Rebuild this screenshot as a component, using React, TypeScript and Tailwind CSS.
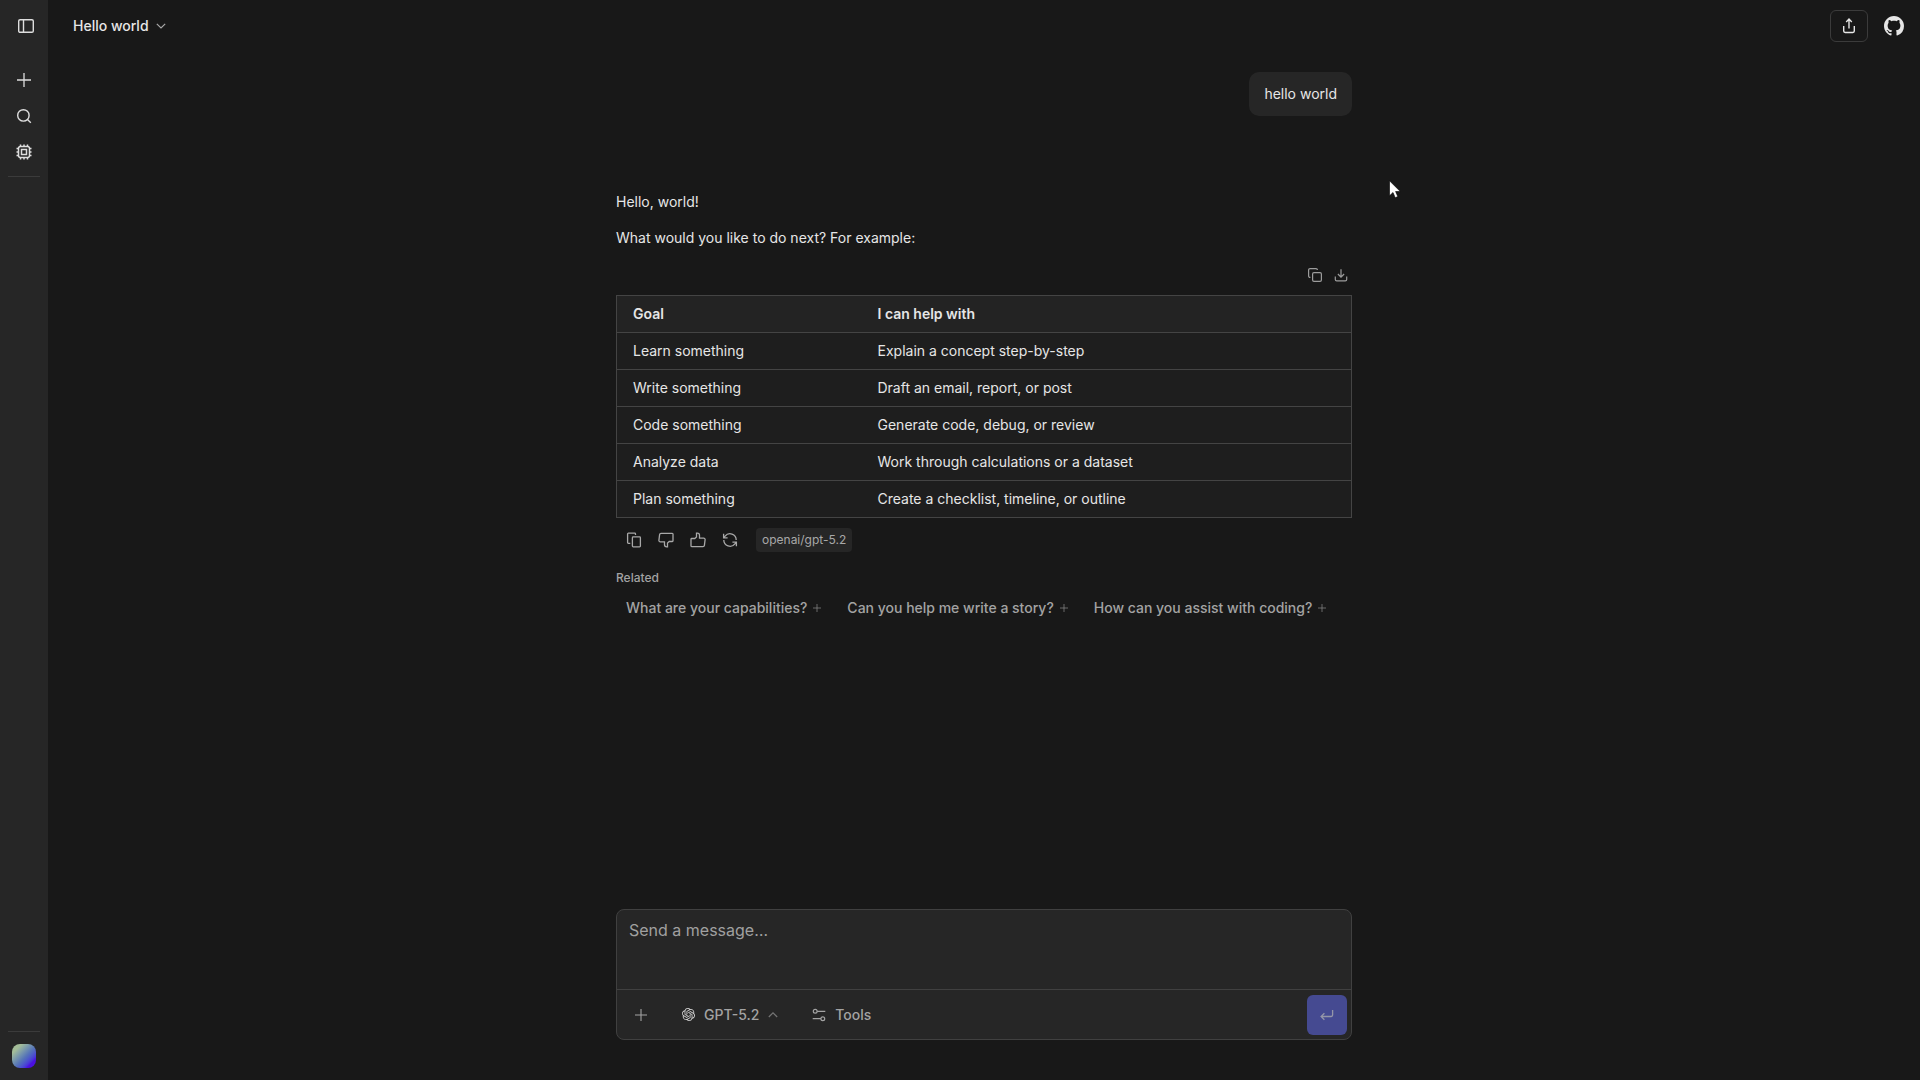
import type { ReactNode } from "react";

interface IconProps {
  size?: number;
  className?: string;
  viewBox?: string;
  strokeWidth?: number;
  children: ReactNode;
}

function Icon({ size = 16, className = "", viewBox = "0 0 16 16", strokeWidth = 1.2, children }: IconProps) {
  return (
    <svg
      width={size}
      height={size}
      viewBox={viewBox}
      fill="none"
      stroke="currentColor"
      strokeWidth={strokeWidth}
      className={`shrink-0 ${className}`}
      aria-hidden="true"
    >
      {children}
    </svg>
  );
}

function PanelIcon() {
  return (
    <Icon strokeWidth={1.4}>
      <rect x="0.7" y="1.7" width="14.6" height="12.6" rx="1.4" />
      <path d="M5.5 1.7v12.6" />
    </Icon>
  );
}

function PlusIcon({ size = 14, className = "" }: { size?: number; className?: string }) {
  return (
    <Icon size={size} viewBox="0 0 14 14" strokeWidth={1.3} className={className}>
      <path d="M7 0v14M0 7h14" />
    </Icon>
  );
}

function SearchIcon() {
  return (
    <Icon strokeWidth={1.4}>
      <circle cx="7.4" cy="7.4" r="5.7" />
      <path d="m11.5 11.5 3.3 3.3" />
    </Icon>
  );
}

function ChipIcon() {
  return (
    <Icon strokeWidth={1.5}>
      <rect x="2.5" y="2.5" width="11" height="11" rx="2" />
      <rect x="5.5" y="5.5" width="5" height="5" />
      <path d="M4.5.5v2M8 .5v2M11.5.5v2M4.5 13.5v2M8 13.5v2M11.5 13.5v2M.5 4.5h2M.5 8h2M.5 11.5h2M13.5 4.5h2M13.5 8h2M13.5 11.5h2" />
    </Icon>
  );
}

function ShareIcon() {
  return (
    <Icon strokeWidth={1.4}>
      <path d="M2.7 8v5.1c0 .8.6 1.4 1.4 1.4h7.8c.8 0 1.4-.6 1.4-1.4V8M8 10.5V1.2M5.2 3.9 8 1.1l2.8 2.8" />
    </Icon>
  );
}

function GithubIcon() {
  return (
    <svg width="20" height="20" viewBox="0 0 16 16" fill="currentColor" aria-hidden="true">
      <path d="M8 0C3.58 0 0 3.58 0 8c0 3.54 2.29 6.53 5.47 7.59.4.07.55-.17.55-.38 0-.19-.01-.82-.01-1.49-2.01.37-2.53-.49-2.69-.94-.09-.23-.48-.94-.82-1.13-.28-.15-.68-.52-.01-.53.63-.01 1.08.58 1.23.82.72 1.21 1.87.87 2.33.66.07-.52.28-.87.51-1.07-1.78-.2-3.64-.89-3.64-3.95 0-.87.31-1.59.82-2.15-.08-.2-.36-1.02.08-2.12 0 0 .67-.21 2.2.82.64-.18 1.32-.27 2-.27s1.36.09 2 .27c1.53-1.04 2.2-.82 2.2-.82.44 1.1.16 1.92.08 2.12.51.56.82 1.27.82 2.15 0 3.07-1.87 3.75-3.65 3.95.29.25.54.73.54 1.48 0 1.07-.01 1.93-.01 2.2 0 .21.15.46.55.38A8.01 8.01 0 0 0 16 8c0-4.42-3.58-8-8-8Z" />
    </svg>
  );
}

function ChevronIcon({ up = false, className = "" }: { up?: boolean; className?: string }) {
  return (
    <Icon size={10} viewBox="0 0 10 10" className={className}>
      <path d={up ? "M.8 7 5 2.8 9.2 7" : "M.8 2.8 5 7l4.2-4.2"} />
    </Icon>
  );
}

function CopyTableIcon() {
  return (
    <Icon strokeWidth={1.2}>
      <rect x="5.6" y="5.6" width="8.8" height="8.8" rx="1.4" />
      <path d="M3.4 10.4H3A1.4 1.4 0 0 1 1.6 9V3A1.4 1.4 0 0 1 3 1.6h6A1.4 1.4 0 0 1 10.4 3" />
    </Icon>
  );
}

function DownloadIcon() {
  return (
    <Icon strokeWidth={1.2}>
      <path d="M2.3 9.5v3c0 .8.6 1.4 1.4 1.4h8.6c.8 0 1.4-.6 1.4-1.4v-3M8 2.2v7.6M4.9 7 8 10.1 11.1 7" />
    </Icon>
  );
}

function CopyIcon() {
  return (
    <Icon strokeWidth={1.3}>
      <rect x="6.4" y="4.9" width="8" height="10" rx=".8" />
      <path d="M4.3 11.3H2.4a.8.8 0 0 1-.8-.8V1.9c0-.4.4-.8.8-.8h6.3c.4 0 .8.4.8.8v1" />
    </Icon>
  );
}

const THUMB_PATH =
  "M1 7.2c0-.4.3-.7.7-.7h3.1L6.5 5V1.2h.8c1.3 0 2.2.9 2.2 2.1v2.9h4.2c.8 0 1.5.7 1.4 1.5l-.7 5.7c-.1.7-.7 1.2-1.4 1.2H1.7a.7.7 0 0 1-.7-.7Z";

function ThumbUpIcon() {
  return (
    <Icon strokeWidth={1.3}>
      <path d={THUMB_PATH} />
    </Icon>
  );
}

function ThumbDownIcon() {
  return (
    <Icon strokeWidth={1.3}>
      <path d={THUMB_PATH} transform="rotate(180 8 8)" />
    </Icon>
  );
}

function RefreshIcon() {
  return (
    <Icon strokeWidth={1.3}>
      <path d="M14.2 8A6.2 6.2 0 0 0 3.1 4.2L1.6 5.9M1.6 1.8v4.1h4M1.8 8a6.2 6.2 0 0 0 11.1 3.8l1.5-1.7M14.4 14.2v-4.1h-4" />
    </Icon>
  );
}

function OpenAIIcon() {
  return (
    <svg width="13" height="13" viewBox="0 0 24 24" fill="currentColor" className="text-[#d4d4d4]" aria-hidden="true">
      <path d="M22.2819 9.8211a5.9847 5.9847 0 0 0-.5157-4.9108 6.0462 6.0462 0 0 0-6.5098-2.9A6.0651 6.0651 0 0 0 4.9807 4.1818a5.9847 5.9847 0 0 0-3.9977 2.9 6.0462 6.0462 0 0 0 .7427 7.0966 5.98 5.98 0 0 0 .511 4.9107 6.051 6.051 0 0 0 6.5146 2.9001A5.9847 5.9847 0 0 0 13.2599 24a6.0557 6.0557 0 0 0 5.7718-4.2058 5.9894 5.9894 0 0 0 3.9977-2.9001 6.0557 6.0557 0 0 0-.7475-7.0729zm-9.022 12.6081a4.4755 4.4755 0 0 1-2.8764-1.0408l.1419-.0804 4.7783-2.7582a.7948.7948 0 0 0 .3927-.6813v-6.7369l2.02 1.1686a.071.071 0 0 1 .038.052v5.5826a4.504 4.504 0 0 1-4.4945 4.4944zm-9.6607-4.1254a4.4708 4.4708 0 0 1-.5346-3.0137l.142.0852 4.783 2.7582a.7712.7712 0 0 0 .7806 0l5.8428-3.3685v2.3324a.0804.0804 0 0 1-.0332.0615L9.74 19.9502a4.4992 4.4992 0 0 1-6.1408-1.6464zM2.3408 7.8956a4.485 4.485 0 0 1 2.3655-1.9728V11.6a.7664.7664 0 0 0 .3879.6765l5.8144 3.3543-2.0201 1.1685a.0757.0757 0 0 1-.071 0l-4.8303-2.7865A4.504 4.504 0 0 1 2.3408 7.872zm16.5963 3.8558L13.1038 8.364 15.1192 7.2a.0757.0757 0 0 1 .071 0l4.8303 2.7913a4.4944 4.4944 0 0 1-.6765 8.1042v-5.6772a.79.79 0 0 0-.407-.667zm2.0107-3.0231l-.142-.0852-4.7735-2.7818a.7759.7759 0 0 0-.7854 0L9.409 9.2297V6.8974a.0662.0662 0 0 1 .0284-.0615l4.8303-2.7866a4.4992 4.4992 0 0 1 6.6802 4.66zM8.3065 12.863l-2.02-1.1638a.0804.0804 0 0 1-.038-.0567V6.0742a4.4992 4.4992 0 0 1 7.3757-3.4537l-.142.0805L8.704 5.459a.7948.7948 0 0 0-.3927.6813zm1.0976-2.3654l2.602-1.4998 2.6069 1.4998v2.9994l-2.5974 1.4997-2.6067-1.4997Z" />
    </svg>
  );
}

function ToolsIcon() {
  return (
    <Icon size={14} viewBox="0 0 14 14" strokeWidth={1.2}>
      <circle cx="3.2" cy="3.3" r="1.9" />
      <circle cx="10.8" cy="10.7" r="1.9" />
      <path d="M5.1 3.3h8.2M8.9 10.7H.7" />
    </Icon>
  );
}

function ReturnIcon() {
  return (
    <Icon strokeWidth={1.3}>
      <path d="M13.6 3v5.1c0 .8-.6 1.4-1.4 1.4H2.4M5.4 6.2 2.1 9.5l3.3 3.3" />
    </Icon>
  );
}

function CursorIcon() {
  return (
    <svg width="12" height="19" viewBox="0 0 12 19" className="absolute top-[180px] left-[1389px]" aria-hidden="true">
      <path d="M.5.8v15l3.5-3.3 2.2 5.2 2.6-1.1-2.2-5.1h4.7Z" fill="#fff" stroke="#000" strokeWidth=".6" />
    </svg>
  );
}

const rows = [
  ["Learn something", "Explain a concept step-by-step"],
  ["Write something", "Draft an email, report, or post"],
  ["Code something", "Generate code, debug, or review"],
  ["Analyze data", "Work through calculations or a dataset"],
  ["Plan something", "Create a checklist, timeline, or outline"],
];

const related = [
  "What are your capabilities?",
  "Can you help me write a story?",
  "How can you assist with coding?",
  "What topics can you discuss?",
];

function Sidebar() {
  return (
    <aside className="flex w-12 shrink-0 flex-col items-center bg-[#262626] pb-3 text-[#dedede]">
      <button aria-label="Toggle sidebar" className="mt-2 ml-1 flex size-9 items-center justify-center">
        <PanelIcon />
      </button>
      <nav className="mt-[18px] flex flex-col">
        <button aria-label="New chat" className="flex size-9 items-center justify-center">
          <PlusIcon />
        </button>
        <button aria-label="Search" className="flex size-9 items-center justify-center">
          <SearchIcon />
        </button>
        <button aria-label="Models" className="flex size-9 items-center justify-center">
          <ChipIcon />
        </button>
      </nav>
      <hr className="mt-1.5 w-8 border-[#3b3b3b]" />
      <hr className="mt-auto mb-3 w-8 border-[#3b3b3b]" />
      <button
        aria-label="Account"
        className="size-6 rounded-lg bg-linear-to-br from-[#a3bd98] from-20% via-[#5572b8] via-55% to-[#4a10e0] to-80%"
      />
    </aside>
  );
}

function Header() {
  return (
    <header className="flex h-[52px] shrink-0 items-center justify-between pr-4 pl-[25px]">
      <button className="flex items-center gap-[7px] text-sm font-medium">
        Hello world
        <ChevronIcon className="text-[#a8a8a8]" />
      </button>
      <div className="flex items-center gap-4">
        <button
          aria-label="Share"
          className="flex h-8 w-[38px] items-center justify-center rounded-md border border-[#3b3b3b]"
        >
          <ShareIcon />
        </button>
        <a href="#github" aria-label="GitHub">
          <GithubIcon />
        </a>
      </div>
    </header>
  );
}

function GoalTable() {
  return (
    <table className="w-full border border-[#444444] bg-[#1e1e1e] text-left text-sm">
      <thead className="bg-[#232323]">
        <tr className="h-[37px]">
          <th className="w-[245px] pl-4 font-semibold">Goal</th>
          <th className="pl-4 font-semibold">I can help with</th>
        </tr>
      </thead>
      <tbody>
        {rows.map(([goal, help]) => (
          <tr key={goal} className="h-[37px] border-t border-[#444444]">
            <td className="pl-4">{goal}</td>
            <td className="pl-4">{help}</td>
          </tr>
        ))}
      </tbody>
    </table>
  );
}

function Composer() {
  return (
    <form className="mb-10 rounded-lg border border-[#404040] bg-[#262626] text-[#a3a3a3]">
      <textarea
        aria-label="Message"
        placeholder="Send a message…"
        className="block h-[79px] w-full resize-none px-3 py-2 text-base outline-none placeholder:text-[#a0a0a0]"
      />
      <div className="flex h-[50px] items-center border-t border-[#404040] pr-1 pl-2 text-sm font-medium">
        <button type="button" aria-label="Add attachment" className="flex size-8 items-center justify-center">
          <PlusIcon size={12} />
        </button>
        <button type="button" className="ml-[25px] flex items-center gap-[9px]">
          <OpenAIIcon />
          GPT-5.2
          <ChevronIcon up className="text-[#757575]" />
        </button>
        <button type="button" className="ml-[34px] flex items-center gap-[9px]">
          <ToolsIcon />
          Tools
        </button>
        <button
          type="submit"
          aria-label="Send"
          className="ml-auto flex size-10 items-center justify-center rounded-md bg-[#454a91] text-[#9496a8]"
        >
          <ReturnIcon />
        </button>
      </div>
    </form>
  );
}

export default function App() {
  return (
    <div className="relative flex h-screen overflow-hidden bg-[#181818] font-['Inter',sans-serif] text-[#e6e6e6]">
      <Sidebar />
      <div className="flex min-w-0 flex-1 flex-col">
        <Header />
        <main className="mx-auto flex min-h-0 w-full max-w-[736px] flex-1 flex-col">
          <div className="mt-5 self-end rounded-[10px] bg-[#262626] px-[15px] py-3 text-sm">hello world</div>

          <div className="mt-[74px] space-y-3 text-sm leading-6">
            <p>Hello, world!</p>
            <p>What would you like to do next? For example:</p>
          </div>

          <div className="mt-[17px] mb-3 flex justify-end gap-[10px] pr-[3px] text-[#9c9c9c]">
            <button aria-label="Copy table">
              <CopyTableIcon />
            </button>
            <button aria-label="Download table">
              <DownloadIcon />
            </button>
          </div>
          <GoalTable />

          <div className="mt-[10px] flex items-center gap-4 pl-[10px] text-[#a8a8a8]">
            <button aria-label="Copy">
              <CopyIcon />
            </button>
            <button aria-label="Bad response">
              <ThumbDownIcon />
            </button>
            <button aria-label="Good response">
              <ThumbUpIcon />
            </button>
            <button aria-label="Retry">
              <RefreshIcon />
            </button>
            <span className="ml-0.5 rounded bg-[#262626] px-1.5 py-1 text-xs">openai/gpt-5.2</span>
          </div>

          <h2 className="mt-[18px] text-xs font-medium text-[#a3a3a3]">Related</h2>
          <div className="mt-3 flex gap-[26px] overflow-hidden pl-[10px] text-sm font-medium whitespace-nowrap text-[#a3a3a3]">
            {related.map((question) => (
              <button key={question} className="flex shrink-0 items-center gap-1.5">
                {question}
                <PlusIcon size={8} className="text-[#858585]" />
              </button>
            ))}
          </div>

          <div className="mt-auto">
            <Composer />
          </div>
        </main>
      </div>
      <CursorIcon />
    </div>
  );
}
